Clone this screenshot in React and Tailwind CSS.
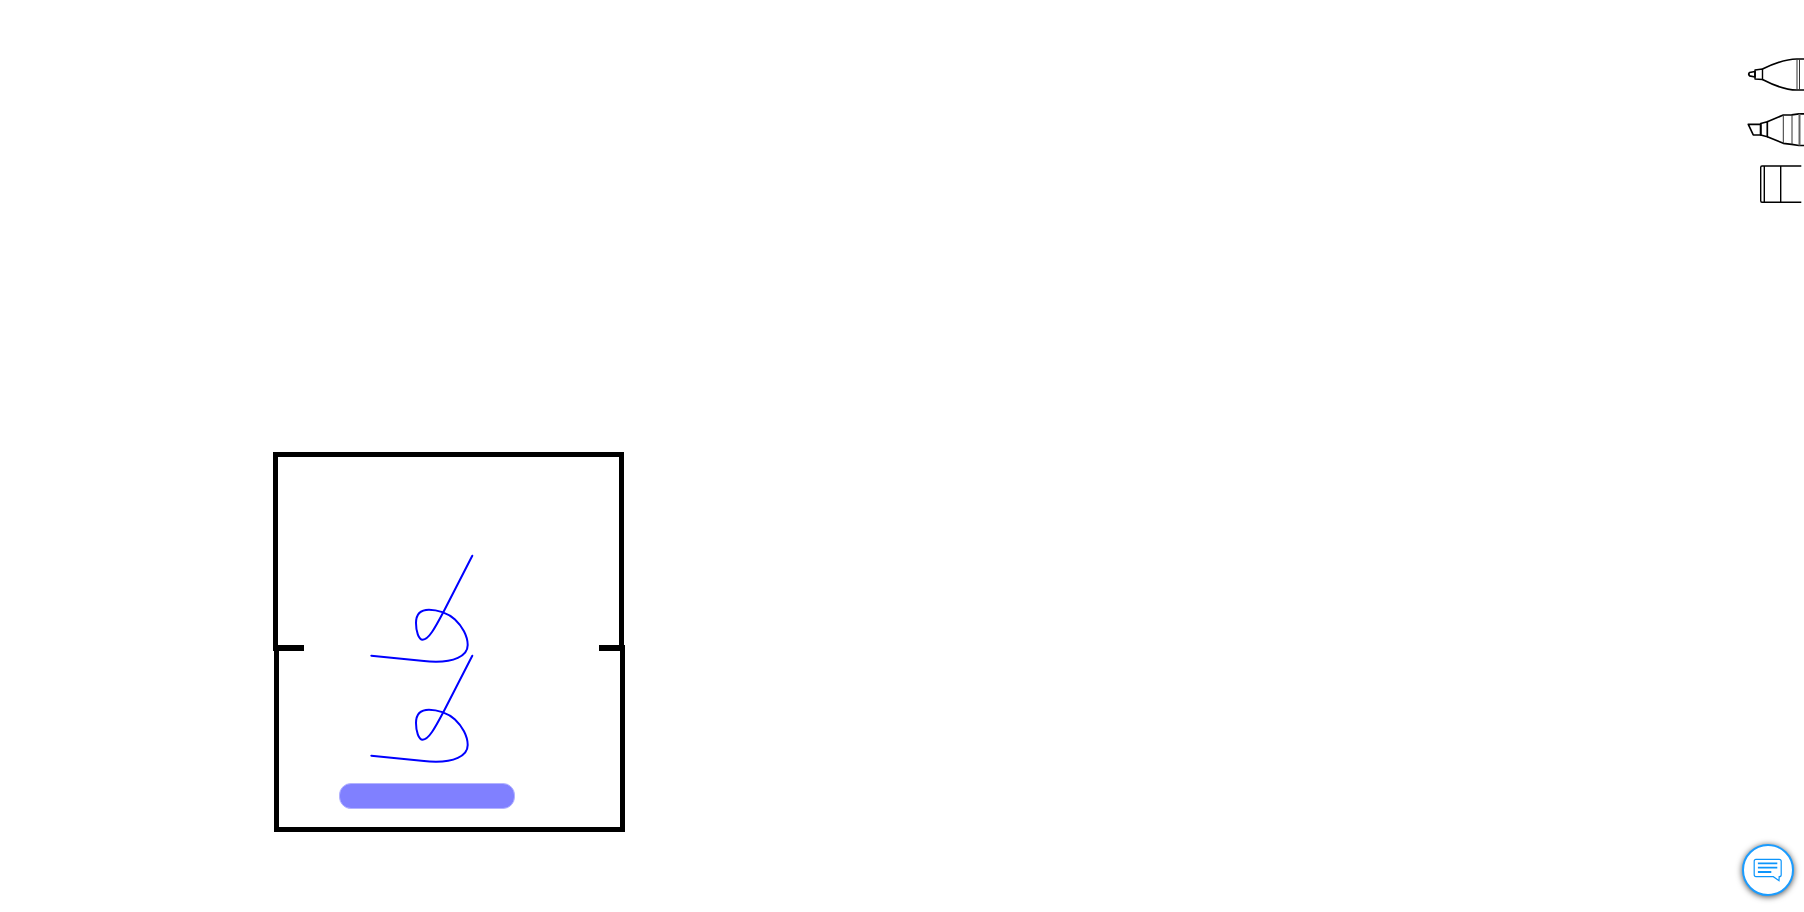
import React from "react";

const STROKE = "M472.3 555.7 L443.3 612.3 C436 626 429 639.7 422.7 639.7 C418.5 639.7 416 631 416 623 C416 614 421 609.7 429 609.7 C437 609.7 448 613 455 619.5 C462 626 467.7 636 467.7 645 C467.7 657 452 661.7 436 661.7 C431 661.7 427 661.4 424 661 L371.3 655.7";

function Pen() {
  return (
    <svg width="60" height="40" viewBox="1744 55 60 40" fill="none" stroke="#000" strokeWidth="1.7" strokeLinejoin="round">
      <path d="M1755 71.5 L1749.5 72.5 Q1748 74 1749.5 75.8 L1755 77 Z" />
      <path d="M1755 70 V79 L1762.5 79.5 V69 Z" strokeWidth="1.4" />
      <path d="M1762.5 69 C1775 63 1785 59 1796.7 59 H1804 M1762.5 79.5 C1775 86 1785 90 1796.7 90 H1804" />
      <path d="M1797 59 V90 M1799.5 59 V90" strokeWidth="1" stroke="#333" />
    </svg>
  );
}

function Marker() {
  return (
    <svg width="60" height="40" viewBox="1744 110 60 40" fill="none" stroke="#000" strokeWidth="1.7" strokeLinejoin="round">
      <path d="M1748.3 124.3 H1760.7 V135 H1753.3 Z" />
      <path d="M1760.7 123.5 L1767.3 121.7 V136.7 L1760.7 135 Z" />
      <path d="M1767.3 121.7 L1783.3 115 L1791.7 114.8 L1799 113.8 H1804 M1767.3 136.7 L1783.3 143.3 L1791.7 144.3 L1799 145.5 H1804" />
      <path d="M1783.3 115 V143.3 M1792 114.8 V144.3" strokeWidth="1" stroke="#333" />
      <path d="M1799.5 113.8 V145.5" strokeWidth="2" stroke="#666" />
    </svg>
  );
}

function Eraser() {
  return (
    <svg width="60" height="42" viewBox="1744 163 60 42" fill="none" stroke="#000" strokeWidth="1.4">
      <path d="M1801.3 166 H1762 Q1760.7 166 1760.7 167.5 V200.8 Q1760.7 202.3 1762 202.3 H1801.3" />
      <path d="M1764.3 166 V202.3 M1780.7 166 V202.3" />
    </svg>
  );
}

export default function App() {
  return (
    <div className="relative h-[912px] overflow-hidden bg-white">
      <div className="relative ml-[273px] w-[352px] pt-[452px]">
        <div className="h-[199px] w-[351px] border-x-[5px] border-t-[5px] border-black" />
        <div className="-mt-[6px] ml-px flex h-[187px] w-[351px] flex-col border-x-[5px] border-b-[5px] border-black">
          <div className="-mx-[5px] flex justify-between">
            <div className="h-[6px] w-[30px] bg-black" />
            <div className="h-[6px] w-[26px] bg-black" />
          </div>
          <div className="mt-[132px] ml-[60px] h-[26px] w-[176px] rounded-[12px] border border-[#b3b3ff] bg-[#8080ff]" />
        </div>
        <svg className="absolute left-0 top-0 pointer-events-none" width="352" height="832" viewBox="273 0 352 832" fill="none" stroke="#0000ff" strokeWidth="2" strokeLinecap="round">
          <path d={STROKE} />
          <path d={STROKE} transform="translate(0 100)" />
        </svg>
      </div>

      <div className="absolute right-0 top-0 flex w-[60px] flex-col">
        <div className="mt-[55px]"><Pen /></div>
        <div className="mt-[15px]"><Marker /></div>
        <div className="mt-[13px]"><Eraser /></div>
      </div>

      <button className="absolute left-[1742px] top-[844px] flex h-[52px] w-[52px] items-center justify-center rounded-full border-[2.5px] border-[#1a9cff] bg-white shadow-[0_1px_6px_rgba(0,0,0,0.7)]">
        <svg className="-ml-[1px]" width="30" height="24" viewBox="0 0 30 24" fill="none" stroke="#0d95fb">
          <path d="M3 1.3 H26.2 Q28.2 1.3 28.2 3.3 V16.7 Q28.2 18.7 26.2 18.7 L26 22.7 L20.3 18.7 H3 Q1.2 18.7 1.2 16.7 V3.3 Q1.2 1.3 3 1.3 Z" strokeWidth="1.2" />
          <path d="M4.9 5.3 H24.3 M4.9 9.7 H24.3 M4.9 14 H18.3" strokeWidth="1.8" />
        </svg>
      </button>
    </div>
  );
}
